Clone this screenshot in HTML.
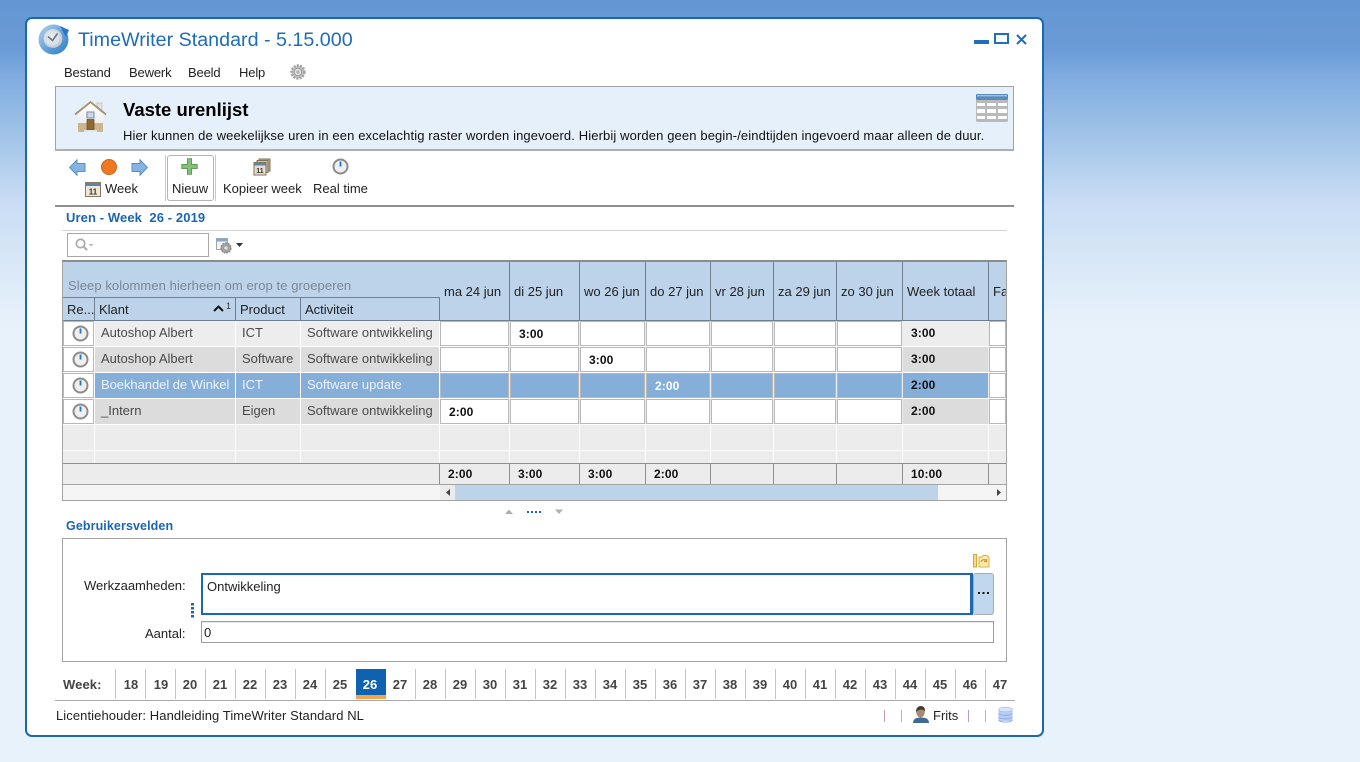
<!DOCTYPE html>
<html><head><meta charset="utf-8"><title>TimeWriter Standard</title>
<style>
html,body{margin:0;padding:0;width:1360px;height:762px;overflow:hidden}
body{position:relative;font-family:"Liberation Sans",sans-serif;font-size:13px;color:#222;
background:linear-gradient(180deg,#6496d3 0,#6a9bd7 50px,#7eabe0 75px,#a0c3e8 135px,#c8dcf3 200px,#d8e7f7 260px,#e8f2fb 330px,#e8f2fb 100%)}
div,span{position:absolute;white-space:nowrap;box-sizing:border-box}
svg{position:absolute;overflow:visible}
.t{line-height:16px}
.m{line-height:16px;letter-spacing:-.15px}
.h{line-height:16px;color:#222}
.g{line-height:16px;color:#4a4a4a}
.b{font-weight:bold;line-height:16px;color:#111;font-size:12px;letter-spacing:.1px}
.sv{width:1px;background:#6f7f8f}
.c{height:25px;border:1px solid #b8b8b8;background:#fff}
.w{font-weight:bold;font-size:13px;color:#444;line-height:16px;top:677px;width:30px;text-align:center}
.d{width:1px;background:#c4c4c4;top:669px;height:30px}
.ln{background:#fff}
</style></head><body>

<div style="left:25px;top:17px;width:1019px;height:720px;background:#fff;border:2px solid #1c68ae;border-radius:7px"></div>

<!-- app icon -->
<svg style="left:38px;top:23px" width="32" height="32" viewBox="0 0 32 32">
<defs><radialGradient id="ai" cx=".45" cy=".45" r=".6"><stop offset="0" stop-color="#eef1f4"/><stop offset=".65" stop-color="#d5dce4"/><stop offset="1" stop-color="#b0bcc9"/></radialGradient>
<linearGradient id="ar" x1="0" y1="0" x2="1" y2="1"><stop offset="0" stop-color="#b5d4ef"/><stop offset=".6" stop-color="#5a9bd6"/><stop offset="1" stop-color="#2f7cc4"/></linearGradient></defs>
<circle cx="15.5" cy="16.5" r="15" fill="url(#ar)"/><circle cx="15" cy="15.500" r="9.500" fill="url(#ai)"/>
<path d="M10 13.500l4.500 4 5-7" fill="none" stroke="#6d7680" stroke-width="1.6"/>
<path d="M22 3l9 4-3 7-3-5z" fill="#2a78c4"/></svg>
<div style="left:78px;top:28px;font-size:19.7px;line-height:24px;color:#1f6cb7">TimeWriter Standard - 5.15.000</div>

<!-- window controls -->
<div style="left:974px;top:40px;width:15px;height:4px;background:#1f6fbe"></div>
<div style="left:994px;top:33px;width:15px;height:11px;border:2px solid #1f6fbe"></div>
<svg style="left:1016px;top:34px" width="11" height="11" viewBox="0 0 11 11"><path d="M1 1l9 9M10 1l-9 9" stroke="#1f6fbe" stroke-width="2.1" fill="none"/></svg>

<!-- menu -->
<div class="m" style="left:64px;top:65px">Bestand</div>
<div class="m" style="left:129px;top:65px">Bewerk</div>
<div class="m" style="left:188px;top:65px">Beeld</div>
<div class="m" style="left:239px;top:65px">Help</div>
<svg style="left:290px;top:64px" width="16" height="16" viewBox="0 0 16 16"><circle cx="8" cy="8" r="6.400" fill="#c4c4c4" stroke="#a4a4a4" stroke-width="2.600" stroke-dasharray="2 1.200"/><circle cx="8" cy="8" r="3.800" fill="#e4e4e4" stroke="#989898"/><circle cx="8" cy="8" r="1.800" fill="#b4b4b4"/></svg>

<!-- info header -->
<div style="left:55px;top:86px;width:959px;height:65px;background:#e6f0fb;border:1px solid #a2a2a2;border-bottom:2px solid #b0b0b0"></div>
<svg style="left:74px;top:101px" width="33" height="33" viewBox="0 0 33 33">
<defs><linearGradient id="hw" x1="0" y1="0" x2="0" y2="1"><stop offset="0" stop-color="#fff"/><stop offset="1" stop-color="#e6e6e6"/></linearGradient></defs>
<path d="M23 2h5v9h-5z" fill="#e2e2e2" stroke="#bbb" stroke-width=".7"/>
<path d="M4 13L16.500 2 29 13v18H4z" fill="url(#hw)"/>
<path d="M1 13.500L16.500 1 32 13.500" fill="none" stroke="#a8916e" stroke-width="1.800"/>
<path d="M4 22h25v9H4z" fill="#cdb68f"/>
<path d="M13 11h7v6h-7z" fill="#c9d9ea" stroke="#7f8d9c"/>
<path d="M13 18.500h7V29h-7z" fill="#8e6a32" stroke="#6c4f22" stroke-width=".7"/>
<path d="M10 29h13v2H10z" fill="#e4e4e4"/></svg>
<div style="left:123px;top:98px;font-size:18.5px;font-weight:bold;line-height:24px;color:#000">Vaste urenlijst</div>
<div class="t" style="left:123px;top:128px;color:#111;letter-spacing:.12px">Hier kunnen de weekelijkse uren in een excelachtig raster worden ingevoerd. Hierbij worden geen begin-/eindtijden ingevoerd maar alleen de duur.</div>
<svg style="left:976px;top:94px" width="32" height="28" viewBox="0 0 32 28">
<rect x="0" y="0" width="32" height="28" rx="1.500" fill="#bababa"/>
<rect x="0" y="0" width="32" height="6" rx="1" fill="#5c8cbe"/><rect x="1" y="1" width="30" height="1.400" fill="#9dbfe0"/>
<g fill="#fff"><rect x="1" y="9" width="8" height="3"/><rect x="11" y="9" width="9" height="3"/><rect x="22" y="9" width="9" height="3"/>
<rect x="1" y="15" width="8" height="4"/><rect x="11" y="15" width="9" height="4"/><rect x="22" y="15" width="9" height="4"/>
<rect x="1" y="22" width="8" height="3"/><rect x="11" y="22" width="9" height="3"/><rect x="22" y="22" width="9" height="3"/></g></svg>

<!-- toolbar -->
<svg style="left:69px;top:159px" width="17" height="17" viewBox="0 0 17 17"><path d="M8 .8L.6 8.500 8 16.200v-3.700h8V4.500H8z" fill="#86b4e2" stroke="#5a8fc4"/></svg>
<svg style="left:101px;top:159px" width="16" height="16" viewBox="0 0 16 16"><circle cx="8" cy="8" r="7.600" fill="#ed7a22" stroke="#c95f10" stroke-width=".8"/></svg>
<svg style="left:131px;top:159px" width="17" height="17" viewBox="0 0 17 17"><path d="M9 .8l7.400 7.700L9 16.200v-3.700H1V4.500h8z" fill="#86b4e2" stroke="#5a8fc4"/></svg>
<svg style="left:85px;top:181px" width="16" height="16" viewBox="0 0 16 16"><rect x=".5" y="1.500" width="15" height="14" fill="#efe8d8" stroke="#8a7a5c"/><rect x="1" y="2" width="14" height="3" fill="#5a86b5"/><text x="8" y="13.500" font-size="8" font-weight="bold" text-anchor="middle" font-family="Liberation Sans" fill="#333">11</text></svg>
<div class="t" style="left:105px;top:181px">Week</div>
<div style="left:165px;top:155px;width:1px;height:46px;background:#c8c8c8"></div>
<div style="left:167px;top:155px;width:47px;height:46px;border:1px solid #b4b4b4;border-radius:3px;background:#fff"></div>
<div style="left:215px;top:155px;width:1px;height:46px;background:#c8c8c8"></div>
<svg style="left:181px;top:158px" width="17" height="17" viewBox="0 0 17 17"><path d="M6.500.8h4v5.700h5.700v4h-5.700v5.700h-4v-5.700H.8v-4h5.700z" fill="#84c079" stroke="#629c58"/></svg>
<div class="t" style="left:172px;top:181px">Nieuw</div>
<svg style="left:253px;top:158px" width="18" height="18" viewBox="0 0 18 18"><rect x="6" y="1" width="11" height="12" fill="#b9ad92" stroke="#7f7358"/><rect x="4" y="2.500" width="11" height="12" fill="#cfc5ad" stroke="#7f7358"/><rect x="1" y="4.500" width="12" height="12.500" fill="#e6dfce" stroke="#7f7358"/><rect x="1.500" y="5" width="11" height="2.500" fill="#5a86b5"/><text x="7" y="15" font-size="7" font-weight="bold" text-anchor="middle" font-family="Liberation Sans" fill="#333">11</text></svg>
<div class="t" style="left:223px;top:181px">Kopieer week</div>
<svg style="left:332px;top:158px" width="17" height="17" viewBox="0 0 17 17"><circle cx="8.500" cy="8.500" r="7" fill="#efefef" stroke="#8c8c8c" stroke-width="2"/><path d="M8.500 3.500v5" stroke="#1f74c8" stroke-width="1.800"/></svg>
<div class="t" style="left:313px;top:181px">Real time</div>
<div style="left:55px;top:205px;width:959px;height:2px;background:#8f8f8f"></div>

<!-- section title -->
<div style="left:66px;top:210px;font-size:13px;font-weight:bold;line-height:16px;color:#1a66b3;letter-spacing:.1px;white-space:pre">Uren - Week  26 - 2019</div>
<div style="left:62px;top:230px;width:945px;height:1px;background:#d2d2d2"></div>

<!-- search -->
<div style="left:67px;top:233px;width:142px;height:24px;border:1px solid #a8a8a8;background:#fff"></div>
<svg style="left:75px;top:238px" width="20" height="14" viewBox="0 0 20 14"><circle cx="5.500" cy="5.500" r="4.200" fill="none" stroke="#aeaeae" stroke-width="1.800"/><path d="M8.500 8.500l3.600 3.600" stroke="#aeaeae" stroke-width="2.200"/><path d="M13.500 6h5L16 8.500z" fill="#b8b8b8"/></svg>
<svg style="left:216px;top:238px" width="28" height="16" viewBox="0 0 28 16"><rect x=".5" y=".5" width="11" height="11" fill="#f4f4f4" stroke="#98a6b6"/><rect x="1" y="1" width="10" height="2.500" fill="#8aa6c6"/><circle cx="10" cy="10" r="5" fill="#a4a4a4" stroke="#858585" stroke-width="1.200" stroke-dasharray="2 .8"/><circle cx="10" cy="10" r="2.200" fill="#ddd" stroke="#8a8a8a" stroke-width=".6"/><path d="M20 5h7l-3.500 4z" fill="#333"/></svg>

<!-- grid -->
<div style="left:62px;top:260px;width:945px;height:241px;border:1px solid #a4a4a4;border-top:2px solid #8c8c8c;background:#ececec"></div>
<div style="left:63px;top:262px;width:943px;height:58px;background:#bcd3ea"></div>
<div style="left:63px;top:320px;width:943px;height:1px;background:#6f7f8f"></div>
<div style="left:63px;top:297px;width:377px;height:1px;background:#6f7f8f"></div>
<div class="sv" style="left:94px;top:297px;height:23px"></div>
<div class="sv" style="left:235px;top:297px;height:23px"></div>
<div class="sv" style="left:300px;top:297px;height:23px"></div>
<div class="sv" style="left:439px;top:297px;height:23px"></div>
<div class="sv" style="left:509px;top:262px;height:58px"></div>
<div class="sv" style="left:579px;top:262px;height:58px"></div>
<div class="sv" style="left:645px;top:262px;height:58px"></div>
<div class="sv" style="left:710px;top:262px;height:58px"></div>
<div class="sv" style="left:773px;top:262px;height:58px"></div>
<div class="sv" style="left:836px;top:262px;height:58px"></div>
<div class="sv" style="left:902px;top:262px;height:58px"></div>
<div class="sv" style="left:988px;top:262px;height:58px"></div>
<div style="left:68px;top:278px;line-height:16px;color:#7d8794;letter-spacing:.08px">Sleep kolommen hierheen om erop te groeperen</div>
<div class="h" style="left:67px;top:302px">Re...</div>
<div class="h" style="left:99px;top:302px">Klant</div>
<svg style="left:213px;top:305px" width="11" height="7" viewBox="0 0 11 7"><path d="M1 6l4.500-4.500L10 6" fill="none" stroke="#111" stroke-width="2"/></svg>
<div style="left:226px;top:300px;font-size:9px;line-height:12px;color:#333">1</div>
<div class="h" style="left:240px;top:302px">Product</div>
<div class="h" style="left:305px;top:302px">Activiteit</div>
<div class="h" style="left:444px;top:284px">ma 24 jun</div>
<div class="h" style="left:514px;top:284px">di 25 jun</div>
<div class="h" style="left:584px;top:284px">wo 26 jun</div>
<div class="h" style="left:650px;top:284px">do 27 jun</div>
<div class="h" style="left:715px;top:284px">vr 28 jun</div>
<div class="h" style="left:778px;top:284px">za 29 jun</div>
<div class="h" style="left:841px;top:284px">zo 30 jun</div>
<div class="h" style="left:907px;top:284px">Week totaal</div>
<div class="h" style="left:993px;top:284px;width:13px;overflow:hidden">Facturabel</div>

<!-- row backgrounds -->
<div style="left:95px;top:321px;width:345px;height:25px;background:#ededed"></div>
<div style="left:95px;top:347px;width:345px;height:25px;background:#dcdcdc"></div>
<div style="left:95px;top:373px;width:345px;height:25px;background:#85aed8"></div>
<div style="left:95px;top:399px;width:345px;height:25px;background:#dcdcdc"></div>
<div style="left:903px;top:321px;width:85px;height:25px;background:#ededed"></div>
<div style="left:903px;top:347px;width:85px;height:25px;background:#dcdcdc"></div>
<div style="left:903px;top:373px;width:85px;height:25px;background:#85aed8"></div>
<div style="left:903px;top:399px;width:85px;height:25px;background:#dcdcdc"></div>
<div class="ln" style="left:63px;top:346px;width:943px;height:1px"></div>
<div class="ln" style="left:63px;top:372px;width:943px;height:1px"></div>
<div class="ln" style="left:63px;top:398px;width:943px;height:1px"></div>
<div class="ln" style="left:63px;top:424px;width:943px;height:1px"></div>
<div class="ln" style="left:63px;top:450px;width:943px;height:1px"></div>
<div class="ln" style="left:94px;top:321px;width:1px;height:142px"></div>
<div class="ln" style="left:235px;top:321px;width:1px;height:142px"></div>
<div class="ln" style="left:300px;top:321px;width:1px;height:142px"></div>
<div class="ln" style="left:439px;top:321px;width:1px;height:142px"></div>
<div class="ln" style="left:509px;top:425px;width:1px;height:38px"></div>
<div class="ln" style="left:579px;top:425px;width:1px;height:38px"></div>
<div class="ln" style="left:645px;top:425px;width:1px;height:38px"></div>
<div class="ln" style="left:710px;top:425px;width:1px;height:38px"></div>
<div class="ln" style="left:773px;top:425px;width:1px;height:38px"></div>
<div class="ln" style="left:836px;top:425px;width:1px;height:38px"></div>
<div class="ln" style="left:902px;top:425px;width:1px;height:38px"></div>
<div class="ln" style="left:988px;top:425px;width:1px;height:38px"></div>

<!-- cells: Re column -->
<div class="c" style="left:63px;top:321px;width:31px"></div>
<div class="c" style="left:63px;top:347px;width:31px"></div>
<div class="c" style="left:63px;top:373px;width:31px"></div>
<div class="c" style="left:63px;top:399px;width:31px"></div>
<svg style="left:72px;top:325px" width="17" height="17" viewBox="0 0 17 17"><circle cx="8.500" cy="8.500" r="7" fill="#efefef" stroke="#8c8c8c" stroke-width="2"/><path d="M8.500 3.500v5" stroke="#1f74c8" stroke-width="1.800"/></svg>
<svg style="left:72px;top:351px" width="17" height="17" viewBox="0 0 17 17"><circle cx="8.500" cy="8.500" r="7" fill="#efefef" stroke="#8c8c8c" stroke-width="2"/><path d="M8.500 3.500v5" stroke="#1f74c8" stroke-width="1.800"/></svg>
<svg style="left:72px;top:377px" width="17" height="17" viewBox="0 0 17 17"><circle cx="8.500" cy="8.500" r="7" fill="#efefef" stroke="#8c8c8c" stroke-width="2"/><path d="M8.500 3.500v5" stroke="#1f74c8" stroke-width="1.800"/></svg>
<svg style="left:72px;top:403px" width="17" height="17" viewBox="0 0 17 17"><circle cx="8.500" cy="8.500" r="7" fill="#efefef" stroke="#8c8c8c" stroke-width="2"/><path d="M8.500 3.500v5" stroke="#1f74c8" stroke-width="1.800"/></svg>

<!-- row text -->
<div class="g" style="left:101px;top:325px">Autoshop Albert</div><div class="g" style="left:242px;top:325px">ICT</div><div class="g" style="left:307px;top:325px">Software ontwikkeling</div>
<div class="g" style="left:101px;top:351px">Autoshop Albert</div><div class="g" style="left:242px;top:351px">Software</div><div class="g" style="left:307px;top:351px">Software ontwikkeling</div>
<div class="g" style="left:101px;top:377px;color:#eef4fb;letter-spacing:-.05px">Boekhandel de Winkel</div><div class="g" style="left:242px;top:377px;color:#eef4fb">ICT</div><div class="g" style="left:307px;top:377px;color:#eef4fb">Software update</div>
<div class="g" style="left:101px;top:403px">_Intern</div><div class="g" style="left:242px;top:403px">Eigen</div><div class="g" style="left:307px;top:403px">Software ontwikkeling</div>

<!-- day cells -->
<div class="c" style="left:440px;top:321px;width:69px"></div><div class="c" style="left:510px;top:321px;width:69px"></div><div class="c" style="left:580px;top:321px;width:65px"></div><div class="c" style="left:646px;top:321px;width:64px"></div><div class="c" style="left:711px;top:321px;width:62px"></div><div class="c" style="left:774px;top:321px;width:62px"></div><div class="c" style="left:837px;top:321px;width:65px"></div><div class="c" style="left:989px;top:321px;width:17px"></div>
<div class="c" style="left:440px;top:347px;width:69px"></div><div class="c" style="left:510px;top:347px;width:69px"></div><div class="c" style="left:580px;top:347px;width:65px"></div><div class="c" style="left:646px;top:347px;width:64px"></div><div class="c" style="left:711px;top:347px;width:62px"></div><div class="c" style="left:774px;top:347px;width:62px"></div><div class="c" style="left:837px;top:347px;width:65px"></div><div class="c" style="left:989px;top:347px;width:17px"></div>
<div class="c" style="left:440px;top:373px;width:69px;background:#85aed8"></div><div class="c" style="left:510px;top:373px;width:69px;background:#85aed8"></div><div class="c" style="left:580px;top:373px;width:65px;background:#85aed8"></div><div class="c" style="left:646px;top:373px;width:64px;background:#85aed8"></div><div class="c" style="left:711px;top:373px;width:62px;background:#85aed8"></div><div class="c" style="left:774px;top:373px;width:62px;background:#85aed8"></div><div class="c" style="left:837px;top:373px;width:65px;background:#85aed8"></div><div class="c" style="left:989px;top:373px;width:17px"></div>
<div class="c" style="left:440px;top:399px;width:69px"></div><div class="c" style="left:510px;top:399px;width:69px"></div><div class="c" style="left:580px;top:399px;width:65px"></div><div class="c" style="left:646px;top:399px;width:64px"></div><div class="c" style="left:711px;top:399px;width:62px"></div><div class="c" style="left:774px;top:399px;width:62px"></div><div class="c" style="left:837px;top:399px;width:65px"></div><div class="c" style="left:989px;top:399px;width:17px"></div>

<div class="b" style="left:519px;top:326px">3:00</div>
<div class="b" style="left:589px;top:352px">3:00</div>
<div class="b" style="left:655px;top:378px;color:#fff">2:00</div>
<div class="b" style="left:449px;top:404px">2:00</div>
<div class="b" style="left:911px;top:325px">3:00</div>
<div class="b" style="left:911px;top:351px">3:00</div>
<div class="b" style="left:911px;top:377px">2:00</div>
<div class="b" style="left:911px;top:403px">2:00</div>

<!-- footer row -->
<div style="left:63px;top:463px;width:943px;height:22px;background:#ececec;border-top:1px solid #8f8f8f;border-bottom:1px solid #a4a4a4"></div>
<div class="sv" style="left:439px;top:464px;height:20px;background:#8f8f8f"></div>
<div class="sv" style="left:509px;top:464px;height:20px;background:#8f8f8f"></div>
<div class="sv" style="left:579px;top:464px;height:20px;background:#8f8f8f"></div>
<div class="sv" style="left:645px;top:464px;height:20px;background:#8f8f8f"></div>
<div class="sv" style="left:710px;top:464px;height:20px;background:#8f8f8f"></div>
<div class="sv" style="left:773px;top:464px;height:20px;background:#8f8f8f"></div>
<div class="sv" style="left:836px;top:464px;height:20px;background:#8f8f8f"></div>
<div class="sv" style="left:902px;top:464px;height:20px;background:#8f8f8f"></div>
<div class="sv" style="left:988px;top:464px;height:20px;background:#8f8f8f"></div>
<div class="b" style="left:448px;top:466px">2:00</div>
<div class="b" style="left:518px;top:466px">3:00</div>
<div class="b" style="left:588px;top:466px">3:00</div>
<div class="b" style="left:654px;top:466px">2:00</div>
<div class="b" style="left:911px;top:466px">10:00</div>

<!-- scrollbar -->
<div style="left:63px;top:485px;width:943px;height:15px;background:#f5f5f5"></div>
<div style="left:440px;top:485px;width:15px;height:15px;background:#ececec"></div>
<div style="left:455px;top:485px;width:483px;height:15px;background:#bcd3ea"></div>
<svg style="left:445px;top:489px" width="6" height="7" viewBox="0 0 6 7"><path d="M5 0v7L1 3.500z" fill="#444"/></svg>
<svg style="left:996px;top:489px" width="6" height="7" viewBox="0 0 6 7"><path d="M1 0v7l4-3.500z" fill="#444"/></svg>

<!-- splitter -->
<svg style="left:504px;top:508px" width="60" height="8" viewBox="0 0 60 8"><path d="M1 6l4-4.500L9 6z" fill="#b0b0b0"/><path d="M51 1.500h8L55 6z" fill="#b0b0b0"/><path d="M23 3h2v2h-2zM27 3h2v2h-2zM31 3h2v2h-2zM35 3h2v2h-2z" fill="#1a66b3"/></svg>

<!-- Gebruikersvelden -->
<div style="left:66px;top:518px;font-size:12.5px;font-weight:bold;line-height:16px;color:#1a66b3;letter-spacing:.1px">Gebruikersvelden</div>
<div style="left:62px;top:538px;width:945px;height:124px;border:1px solid #a4a4a4;background:#fff"></div>
<svg style="left:973px;top:554px" width="17" height="14" viewBox="0 0 17 14"><rect x=".5" y=".5" width="3" height="12.500" fill="#f6dc8a" stroke="#d2a93a"/><path d="M6 3h3l1-1.500h4l2 2V13H6z" fill="#fbe9ae" stroke="#d9b343"/><path d="M8 8a3 3 0 0 1 5-1.500M13.500 5v2.500H11" fill="none" stroke="#d09a1e" stroke-width="1.200"/></svg>
<div class="t" style="left:84px;top:578px">Werkzaamheden:</div>
<div style="left:201px;top:573px;width:772px;height:42px;border:2px solid #1c68ae;border-right-width:3px;background:#fff"></div>
<div style="left:973px;top:573px;width:21px;height:42px;background:#c1d7ee;border:1px solid #a8a8a8;border-radius:3px"></div>
<svg style="left:977px;top:592px" width="13" height="3" viewBox="0 0 13 3"><path d="M1 0h2v2H1zM5.500 0h2v2h-2zM10 0h2v2h-2z" fill="#111"/></svg>
<div class="t" style="left:207px;top:579px">Ontwikkeling</div>
<svg style="left:191px;top:603px" width="3" height="15" viewBox="0 0 3 15"><path d="M0 0h3v2.500H0zM0 4h3v2.500H0zM0 8h3v2.500H0zM0 12h3v2.500H0z" fill="#1c68ae"/></svg>
<div class="t" style="left:145px;top:626px">Aantal:</div>
<div style="left:201px;top:621px;width:793px;height:22px;border:1px solid #a0a0a0;box-shadow:inset 0 1px 0 #e6e6e6;background:#fff"></div>
<div class="t" style="left:204px;top:625px">0</div>

<!-- week bar -->
<div style="left:63px;top:677px;font-size:13px;font-weight:bold;line-height:16px;color:#444;letter-spacing:.1px">Week:</div>
<div class="d" style="left:115px"></div><div class="d" style="left:145px"></div><div class="d" style="left:175px"></div><div class="d" style="left:205px"></div><div class="d" style="left:235px"></div><div class="d" style="left:265px"></div><div class="d" style="left:295px"></div><div class="d" style="left:325px"></div><div class="d" style="left:385px"></div><div class="d" style="left:415px"></div><div class="d" style="left:445px"></div><div class="d" style="left:475px"></div><div class="d" style="left:505px"></div><div class="d" style="left:535px"></div><div class="d" style="left:565px"></div><div class="d" style="left:595px"></div><div class="d" style="left:625px"></div><div class="d" style="left:655px"></div><div class="d" style="left:685px"></div><div class="d" style="left:715px"></div><div class="d" style="left:745px"></div><div class="d" style="left:775px"></div><div class="d" style="left:805px"></div><div class="d" style="left:835px"></div><div class="d" style="left:865px"></div><div class="d" style="left:895px"></div><div class="d" style="left:925px"></div><div class="d" style="left:955px"></div><div class="d" style="left:985px"></div>
<div style="left:356px;top:669px;width:30px;height:26px;background:#0f62b0"></div>
<div style="left:356px;top:695px;width:30px;height:4px;background:#f6a34a"></div>
<div class="w" style="left:116px">18</div><div class="w" style="left:146px">19</div><div class="w" style="left:175px">20</div><div class="w" style="left:205px">21</div><div class="w" style="left:235px">22</div><div class="w" style="left:265px">23</div><div class="w" style="left:295px">24</div><div class="w" style="left:325px">25</div><div class="w" style="left:355px;color:#fff">26</div><div class="w" style="left:385px">27</div><div class="w" style="left:415px">28</div><div class="w" style="left:445px">29</div><div class="w" style="left:475px">30</div><div class="w" style="left:505px">31</div><div class="w" style="left:535px">32</div><div class="w" style="left:565px">33</div><div class="w" style="left:595px">34</div><div class="w" style="left:625px">35</div><div class="w" style="left:655px">36</div><div class="w" style="left:685px">37</div><div class="w" style="left:715px">38</div><div class="w" style="left:745px">39</div><div class="w" style="left:775px">40</div><div class="w" style="left:805px">41</div><div class="w" style="left:835px">42</div><div class="w" style="left:865px">43</div><div class="w" style="left:895px">44</div><div class="w" style="left:925px">45</div><div class="w" style="left:955px">46</div><div class="w" style="left:985px">47</div>
<div style="left:55px;top:700px;width:960px;height:1px;background:#a8a8a8"></div>

<!-- status bar -->
<div class="t" style="left:56px;top:708px;letter-spacing:.08px">Licentiehouder: Handleiding TimeWriter Standard NL</div>
<div style="left:884px;top:710px;width:1px;height:12px;background:#c49ac0"></div>
<div style="left:901px;top:710px;width:1px;height:12px;background:#9cc0e0"></div>
<svg style="left:913px;top:706px" width="16" height="17" viewBox="0 0 16 17"><path d="M0 17c0-4 3-5.500 8-5.500s8 1.500 8 5.500z" fill="#3f6a94"/><ellipse cx="7.500" cy="6" rx="4.300" ry="5.500" fill="#a88a74"/><path d="M3 6C3 1.500 5.500 0 8 0s4.500 2 4 5.500C11 3 6 3 3 6z" fill="#4a3b30"/></svg>
<div class="t" style="left:933px;top:708px">Frits</div>
<div style="left:968px;top:710px;width:1px;height:12px;background:#c49ac0"></div>
<div style="left:985px;top:710px;width:1px;height:12px;background:#9cc0e0"></div>
<svg style="left:998px;top:707px" width="15" height="16" viewBox="0 0 15 16"><rect x=".5" y="2" width="14" height="12" fill="#b5cdf2"/><ellipse cx="7.500" cy="2.500" rx="7" ry="2.300" fill="#d7e4f9" stroke="#9db8e4" stroke-width=".6"/><path d="M.5 6.500c2 2.500 12 2.500 14 0M.5 10c2 2.500 12 2.500 14 0M.5 13c2 2.800 12 2.800 14 0" fill="none" stroke="#8eabdf"/></svg>

</body></html>
